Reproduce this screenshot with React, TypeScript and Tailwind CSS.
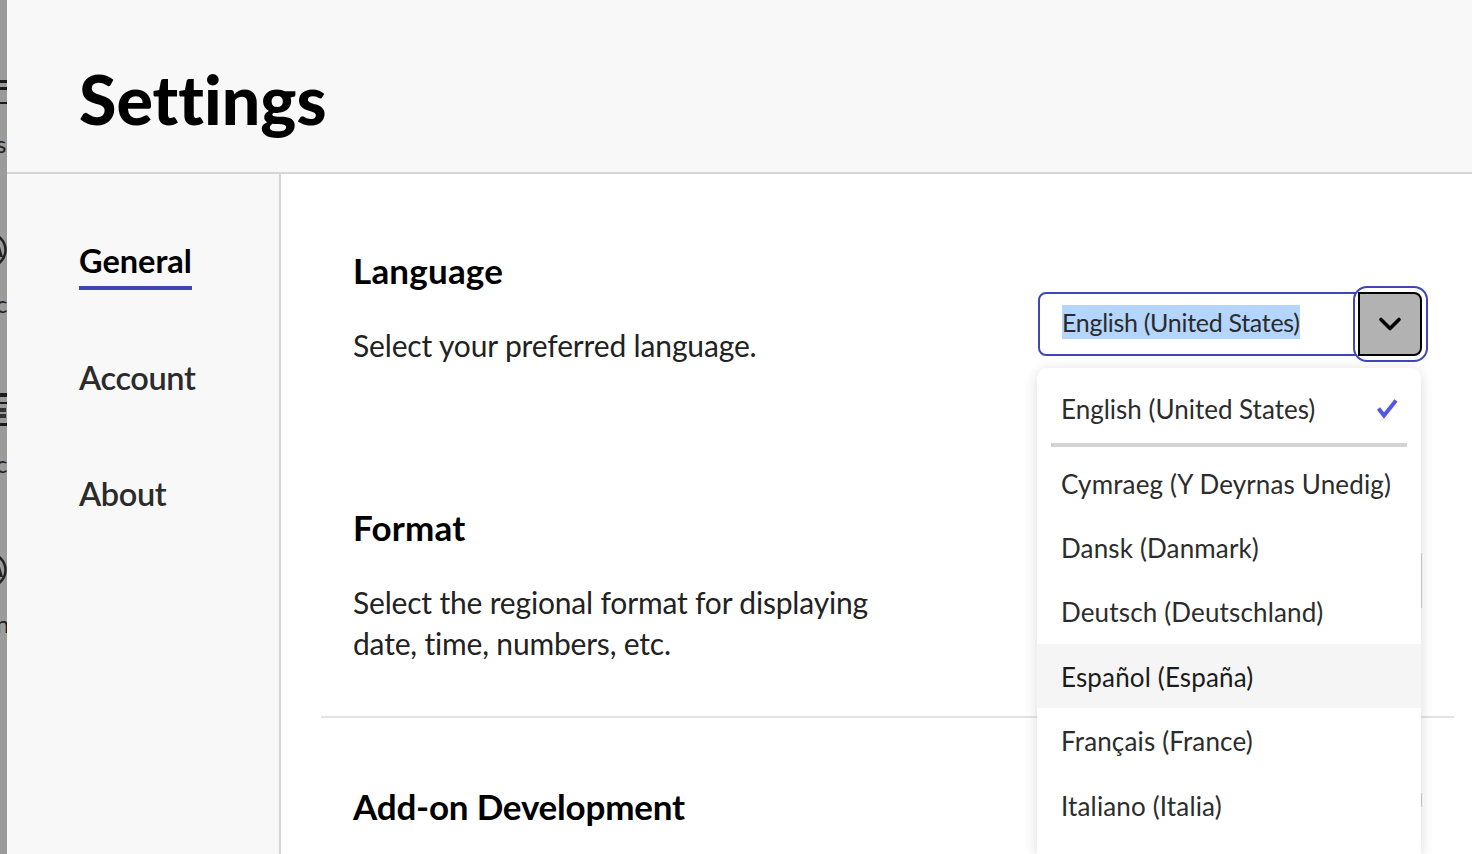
import React from "react";
import { ChevronDown } from "lucide-react";

const font = "font-['Lato','Noto_Sans',sans-serif]";

const languages = [
  { name: "Cymraeg (Y Deyrnas Unedig)", h: "h-[64px]" },
  { name: "Dansk (Danmark)", h: "h-[64px]" },
  { name: "Deutsch (Deutschland)", h: "h-[64px]" },
  { name: "Español (España)", h: "h-[64px] pt-[2px] bg-[#f5f5f5] text-[#1b1b1b]" },
  { name: "Français (France)", h: "h-[65px]" },
  { name: "Italiano (Italia)", h: "h-[64px] pt-[2px]" },
];

const RingIcon: React.FC = () => (
  <svg width="36" height="36" viewBox="0 0 36 36" className="-ml-[29px] shrink-0">
    <circle cx="18" cy="18" r="16.5" fill="none" stroke="#222" strokeWidth="2.5" />
    <path d="M29 15l3 10h-3z" fill="#222" />
  </svg>
);

const LinesIcon: React.FC<{ dense?: boolean }> = ({ dense }) => (
  <svg width="7" height="36" viewBox="0 0 7 36" className="shrink-0">
    {dense ? (
      <>
        <rect y="1" width="7" height="4" fill="#1c1c1c" />
        <rect y="10" width="7" height="2" fill="#1c1c1c" />
        <rect y="16" width="6" height="4" fill="#333" />
        <rect y="22" width="6" height="4" fill="#333" />
        <rect y="31" width="7" height="3" fill="#1c1c1c" />
      </>
    ) : (
      <>
        <rect y="8" width="7" height="3" fill="#1c1c1c" />
        <rect y="15" width="7" height="3" fill="#1c1c1c" />
        <rect y="30" width="7" height="2" fill="#1c1c1c" />
      </>
    )}
  </svg>
);

const RailItem: React.FC<{ label: string; children: React.ReactNode }> = ({ label, children }) => (
  <div className="h-[160px] flex flex-col items-start">
    {children}
    <div className="mt-[27px] -ml-[4px] text-[24px] leading-[18px] text-[#222]">{label}</div>
  </div>
);

const Rail: React.FC = () => (
  <div className="w-[7px] h-full shrink-0 bg-[#9b9b9b] overflow-hidden pt-[72px]">
    <RailItem label="s">
      <LinesIcon />
    </RailItem>
    <RailItem label="c">
      <RingIcon />
    </RailItem>
    <RailItem label="c">
      <LinesIcon dense />
    </RailItem>
    <RailItem label="n">
      <RingIcon />
    </RailItem>
  </div>
);

const App: React.FC = () => {
  return (
    <div className={`w-[1472px] h-[854px] overflow-hidden flex relative bg-white text-black ${font}`}>
      <Rail />
      <div className="flex-1 flex flex-col min-w-0">
        <div className="h-[174px] shrink-0 bg-[#f8f8f8] border-b-2 border-[#d5d5d5] pl-[72px] pt-[59px]">
          <h1 className="text-[68px] leading-[80px] font-black tracking-[0.05px]">Settings</h1>
        </div>
        <div className="flex-1 flex min-h-0">
          <div className="w-[274px] shrink-0 bg-[#f8f8f8] border-r-2 border-[#d5d5d5] pl-[72px] pt-[67px] flex flex-col items-start gap-[68px]">
            <div className="text-[32.5px] leading-[40px] font-bold border-b-[4px] border-[#4046b8] h-[49px]">General</div>
            <div className="text-[32.5px] leading-[40px] font-semibold tracking-[-0.4px] text-[#2b2b2b] h-[48px]">Account</div>
            <div className="text-[32.5px] leading-[40px] font-semibold tracking-[-0.4px] text-[#2b2b2b] h-[48px]">About</div>
          </div>
          <div className="flex-1 min-w-0 pl-[40px] pr-[18px] pt-[74px]">
            <div className="pl-[32px]">
              <h2 className="text-[35px] leading-[44px] font-bold tracking-[0.2px]">Language</h2>
              <p className="mt-[35px] text-[30px] leading-[36px] tracking-[-0.15px] text-[#222]">Select your preferred language.</p>
              <h2 className="mt-[142px] text-[35px] leading-[44px] font-bold tracking-[0.2px]">Format</h2>
              <p className="mt-[33px] text-[30px] leading-[41px] tracking-[-0.18px] text-[#222] w-[560px]">
                Select the regional format for displaying date, time, numbers, etc.
              </p>
            </div>
            <div className="mt-[52px] h-[2px] bg-[#e3e3e3]" />
            <h2 className="mt-[66px] pl-[32px] text-[35px] leading-[44px] font-bold tracking-[-0.2px]">Add-on Development</h2>
          </div>
        </div>
      </div>

      {/* controls hidden behind the open menu, only their right edge shows */}
      <div className="absolute left-[1400px] top-[553px] w-[22px] h-[55px] border-r border-[#cfcfcf]" />
      <div className="absolute left-[1400px] top-[793px] w-[22px] h-[14px] border-r border-[#cfcfcf]" />

      {/* open picker sits above the page */}
      <div className="absolute left-[1038px] top-[292px] w-[384px] h-[64px] rounded-[8px] border-2 border-[#4046b8] bg-white flex items-center pl-[22px] pb-[4px]">
        <span className="bg-[#b4d5fe] text-[#2b2b2b] text-[25px] leading-[34px] tracking-[-0.3px]">English (United States)</span>
      </div>
      <div className="absolute left-[1353px] top-[286px] w-[75px] h-[76px] rounded-[14px] border-2 border-[#4046b8] bg-white pt-[4px] pb-[4px] pl-[3px] pr-[4px]">
        <div className="w-full h-full rounded-r-[8px] border-2 border-black bg-[#b2b2b2] flex items-center justify-center">
          <ChevronDown size={36} strokeWidth={2.4} className="text-black" />
        </div>
      </div>
      <div className="absolute left-[1037px] top-[368px] w-[384px] h-[486px] rounded-t-[10px] bg-white shadow-[0_2px_14px_rgba(0,0,0,0.14)] text-[#2c2c2c] text-[26px] leading-[36px]">
        <div className="h-[79px] mx-[14px] border-b-4 border-[#d3d3d3] flex items-center justify-between pl-[10px] pr-[8px] pt-[6px]">
          <span>English (United States)</span>
          <svg width="24" height="24" viewBox="0 0 24 24" className="mb-[1px]">
            <path d="M3.5 12.5l5.5 7L21 4.5" fill="none" stroke="#5258e4" strokeWidth="4" />
          </svg>
        </div>
        <div className="pt-[5px] tracking-[0.15px]">
          {languages.map((l) => (
            <div key={l.name} className={`flex items-center pl-[24px] whitespace-nowrap ${l.h}`}>
              {l.name}
            </div>
          ))}
        </div>
      </div>
    </div>
  );
};

export default App;
